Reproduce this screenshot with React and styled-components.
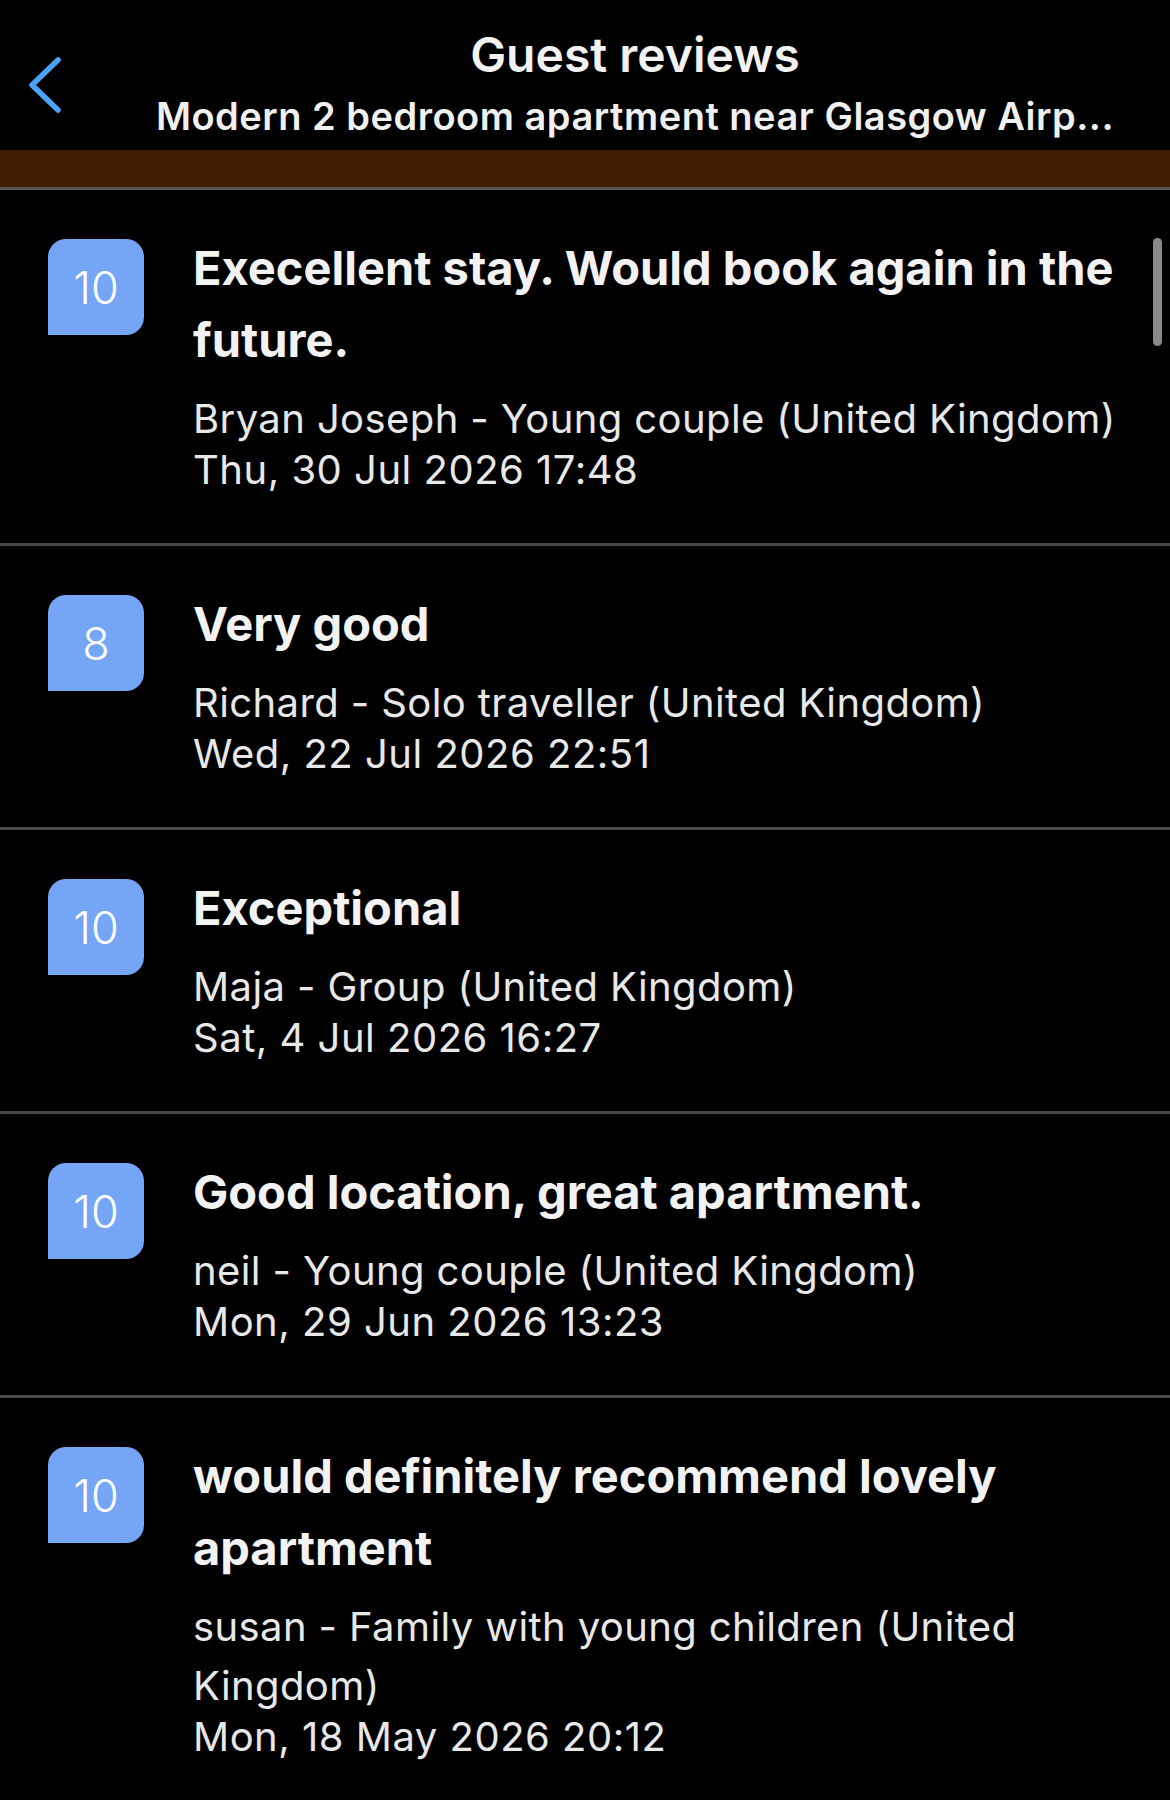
import React from "react";
import styled, { createGlobalStyle } from "styled-components";

const GlobalStyle = createGlobalStyle`
  html, body {
    margin: 0;
    padding: 0;
    background: #000000;
  }
  body {
    font-family: Inter, "Noto Sans", "Liberation Sans", sans-serif;
    color: #f2f2f2;
  }
  * {
    box-sizing: border-box;
  }
`;

const REVIEWS = [
  {
    score: 10,
    title: "Execellent stay. Would book again in the future.",
    author: "Bryan Joseph - Young couple (United Kingdom)",
    date: "Thu, 30 Jul 2026 17:48",
  },
  {
    score: 8,
    title: "Very good",
    author: "Richard - Solo traveller (United Kingdom)",
    date: "Wed, 22 Jul 2026 22:51",
  },
  {
    score: 10,
    title: "Exceptional",
    author: "Maja - Group (United Kingdom)",
    date: "Sat, 4 Jul 2026 16:27",
  },
  {
    score: 10,
    title: "Good location, great apartment.",
    author: "neil - Young couple (United Kingdom)",
    date: "Mon, 29 Jun 2026 13:23",
  },
  {
    score: 10,
    title: "would definitely recommend lovely apartment",
    author: "susan - Family with young children (United Kingdom)",
    date: "Mon, 18 May 2026 20:12",
  },
];

const Screen = styled.div`
  width: 1170px;
  min-height: 1800px;
  background: #000000;
`;

const Header = styled.header`
  display: flex;
  align-items: flex-start;
  height: 150px;
`;

const BackButton = styled.button`
  flex: 0 0 100px;
  height: 120px;
  padding: 52px 0 0 26px;
  background: none;
  border: none;
  text-align: left;
  cursor: pointer;

  svg {
    display: block;
  }
`;

const TitleBlock = styled.div`
  flex: 1;
  min-width: 0;
  padding: 27px 52px 0 52px;
  text-align: center;
`;

const Title = styled.h1`
  margin: 0;
  font-size: 48px;
  line-height: 56px;
  font-weight: 600;
  color: #f2f2f2;
`;

const Subtitle = styled.div`
  margin-top: 10px;
  font-size: 38px;
  line-height: 46px;
  font-weight: 600;
  letter-spacing: 0.5px;
  color: #f0f0f0;
  white-space: nowrap;
`;

const Banner = styled.div`
  height: 40px;
  background: #3d1e05;
  border-bottom: 3px solid #575757;
`;

const List = styled.div`
  position: relative;
`;

const Scrollbar = styled.div`
  position: absolute;
  top: 48px;
  right: 8px;
  width: 9px;
  height: 108px;
  border-radius: 5px;
  background: #8a8a8a;
`;

const Row = styled.div`
  display: flex;
  gap: 49px;
  padding: 42px 35px 51px 48px;
  border-bottom: 3px solid #4a4a4a;
`;

const Badge = styled.div`
  flex: 0 0 96px;
  height: 96px;
  margin-top: 7px;
  border-radius: 18px 18px 18px 0;
  background: #74a6f5;
  color: #ffffff;
  font-size: 45px;
  font-weight: 300;
  display: flex;
  align-items: center;
  justify-content: center;
`;

const Body = styled.div`
  flex: 1;
  min-width: 0;
`;

const ReviewTitle = styled.div`
  font-size: 47px;
  line-height: 72px;
  font-weight: 700;
  color: #f2f2f2;
`;

const Author = styled.div`
  margin-top: 13px;
  font-size: 40px;
  line-height: 59px;
  letter-spacing: 0.4px;
  color: #e8e8e8;
`;

const DateLine = styled.div`
  font-size: 40px;
  line-height: 44px;
  letter-spacing: 0.5px;
  color: #e8e8e8;
`;

const Chevron = () => (
  <svg width="40" height="60" viewBox="0 0 40 60">
    <polyline
      points="32,4 6,29 32,54"
      fill="none"
      stroke="#4aa3f5"
      strokeWidth="5.5"
      strokeLinecap="round"
      strokeLinejoin="round"
    />
  </svg>
);

const Review = ({ review }) => (
  <Row>
    <Badge>{review.score}</Badge>
    <Body>
      <ReviewTitle>{review.title}</ReviewTitle>
      <Author>{review.author}</Author>
      <DateLine>{review.date}</DateLine>
    </Body>
  </Row>
);

const App = () => {
  return (
    <Screen>
      <GlobalStyle />
      <Header>
        <BackButton aria-label="Back">
          <Chevron />
        </BackButton>
        <TitleBlock>
          <Title>Guest reviews</Title>
          <Subtitle>Modern 2 bedroom apartment near Glasgow Airp...</Subtitle>
        </TitleBlock>
      </Header>
      <Banner />
      <List>
        {REVIEWS.map((review, i) => (
          <Review key={i} review={review} />
        ))}
        <Scrollbar />
      </List>
    </Screen>
  );
};

export default App;
